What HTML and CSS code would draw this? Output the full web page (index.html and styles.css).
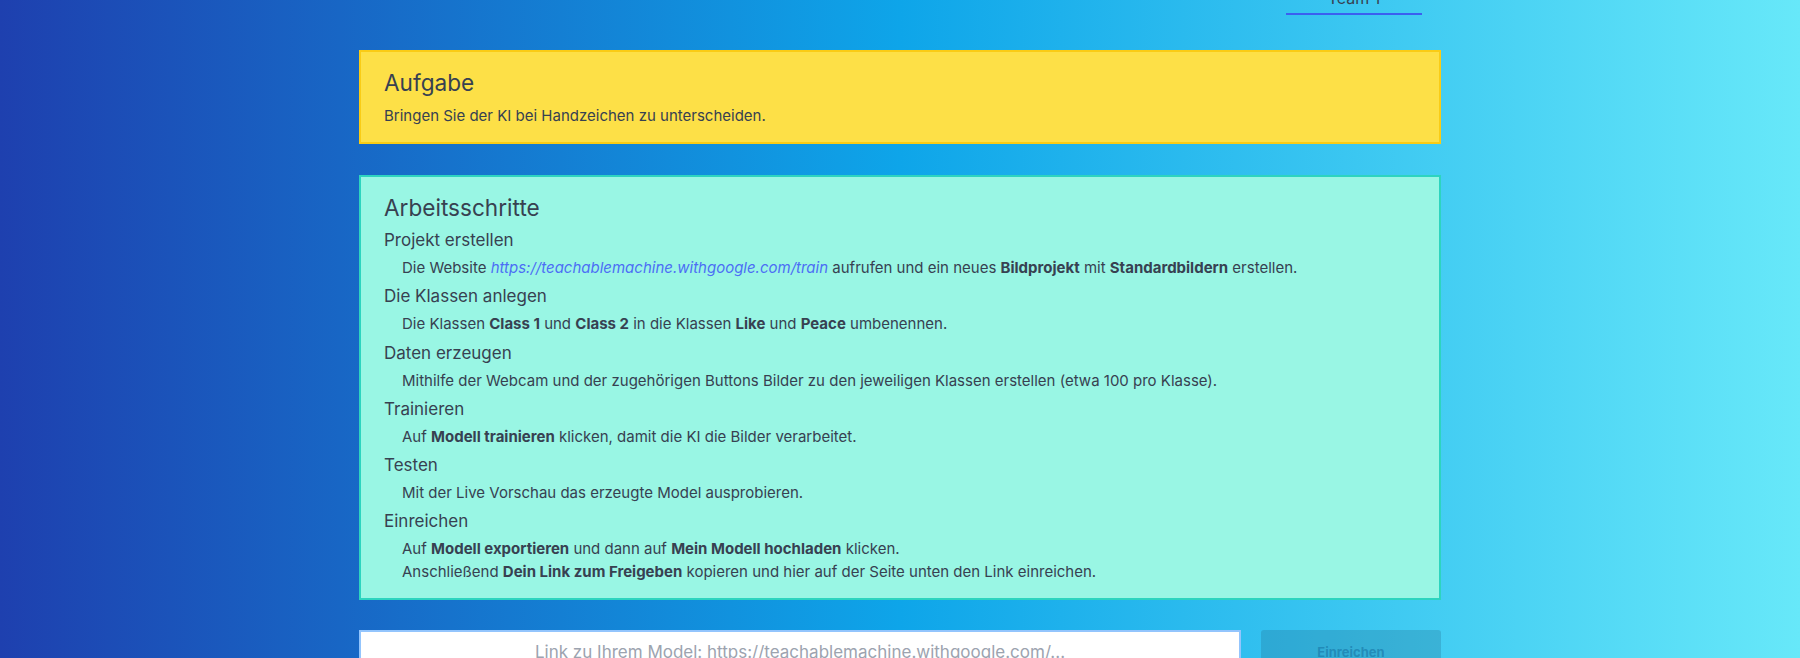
FILE: index.html
```html
<!DOCTYPE html>
<html lang="de">
<head>
<meta charset="utf-8">
<title>Aufgabe</title>
<link rel="stylesheet" href="styles.css">
</head>
<body>
<div class="page">
  <nav class="tabs">
    <div class="tab">Team 1</div>
  </nav>

  <section class="card task">
    <h2 class="card-title">Aufgabe</h2>
    <p class="task-text">Bringen Sie der KI bei Handzeichen zu unterscheiden.</p>
  </section>

  <section class="card steps">
    <h2 class="card-title">Arbeitsschritte</h2>
    <div class="step">
      <h3 class="step-title">Projekt erstellen</h3>
      <p class="step-text">Die Website <a class="link" href="#">https://teachablemachine.withgoogle.com/train</a> aufrufen und ein neues <b>Bildprojekt</b> mit <b>Standardbildern</b> erstellen.</p>
    </div>
    <div class="step">
      <h3 class="step-title">Die Klassen anlegen</h3>
      <p class="step-text">Die Klassen <b>Class 1</b> und <b>Class 2</b> in die Klassen <b>Like</b> und <b>Peace</b> umbenennen.</p>
    </div>
    <div class="step">
      <h3 class="step-title">Daten erzeugen</h3>
      <p class="step-text">Mithilfe der Webcam und der zugehörigen Buttons Bilder zu den jeweiligen Klassen erstellen (etwa 100 pro Klasse).</p>
    </div>
    <div class="step">
      <h3 class="step-title">Trainieren</h3>
      <p class="step-text">Auf <b>Modell trainieren</b> klicken, damit die KI die Bilder verarbeitet.</p>
    </div>
    <div class="step">
      <h3 class="step-title">Testen</h3>
      <p class="step-text">Mit der Live Vorschau das erzeugte Model ausprobieren.</p>
    </div>
    <div class="step">
      <h3 class="step-title">Einreichen</h3>
      <p class="step-text">Auf <b>Modell exportieren</b> und dann auf <b>Mein Modell hochladen</b> klicken.</p>
      <p class="step-text">Anschließend <b>Dein Link zum Freigeben</b> kopieren und hier auf der Seite unten den Link einreichen.</p>
    </div>
  </section>

  <form class="submit">
    <input class="link-input" type="text" placeholder="Link zu Ihrem Model: https://teachablemachine.withgoogle.com/...">
    <button class="submit-btn" type="button" disabled>Einreichen</button>
  </form>
</div>
</body>
</html>
```

FILE: styles.css
```css
html, body {
  margin: 0;
  padding: 0;
}

body {
  min-height: 658px;
  background: linear-gradient(to right, #1e40af 0%, #0ea5e9 50%, #67e8f9 100%);
  font-family: Inter, "Noto Sans", "Liberation Sans", sans-serif;
  color: #374151;
  overflow: hidden;
}

.page {
  width: 1082px;
  margin: 0 auto;
  display: flex;
  flex-direction: column;
}

.tabs {
  display: flex;
  justify-content: flex-end;
  margin-top: -14px;
  padding-right: 19px;
}

.tab {
  width: 136px;
  text-align: center;
  font-size: 16px;
  line-height: 24px;
  padding-bottom: 3px;
  border-bottom: 2px solid #3b5ff0;
  color: #374151;
}

.card {
  box-sizing: border-box;
  border: 2px solid;
}

.task {
  margin-top: 35px;
  background: #fde047;
  border-color: #facc15;
  padding: 16px 24px 16px 23px;
}

.steps {
  margin-top: 31px;
  background: #99f6e4;
  border-color: #2dd4bf;
  padding: 16px 24px 15px 23px;
}

.card-title {
  margin: 0;
  font-size: 22.6px;
  line-height: 30px;
  font-weight: 400;
}

.task-text {
  margin: 8px 0 0;
  font-size: 15px;
  line-height: 20px;
}

.step {
  margin-top: 5.25px;
}

.step:first-of-type {
  margin-top: 5px;
}

.step-title {
  margin: 0 0 4px;
  font-size: 17px;
  line-height: 24px;
  font-weight: 400;
}

.step-text {
  margin: 0;
  padding-left: 18px;
  font-size: 15px;
  line-height: 23px;
}

.step-text b {
  font-weight: 700;
}

.link {
  color: #4c6ef5;
  font-style: italic;
  text-decoration: none;
}

.submit {
  margin: 30px 0 0;
  display: flex;
  gap: 20px;
}

.link-input {
  flex: 1;
  box-sizing: border-box;
  height: 44px;
  padding: 8px 12px;
  border: 2px solid #93c5fd;
  background: #fff;
  font-family: Inter, "Noto Sans", "Liberation Sans", sans-serif;
  font-size: 17px;
  line-height: 24px;
  text-align: center;
  color: #374151;
  outline: none;
}

.link-input::placeholder {
  color: #9ca3af;
}

.submit-btn {
  width: 180px;
  height: 44px;
  border: none;
  border-radius: 3px;
  background: rgba(30, 100, 130, 0.25);
  color: rgba(20, 110, 160, 0.55);
  font-family: Inter, "Noto Sans", "Liberation Sans", sans-serif;
  font-size: 13px;
  font-weight: 700;
  line-height: 24px;
}
```
